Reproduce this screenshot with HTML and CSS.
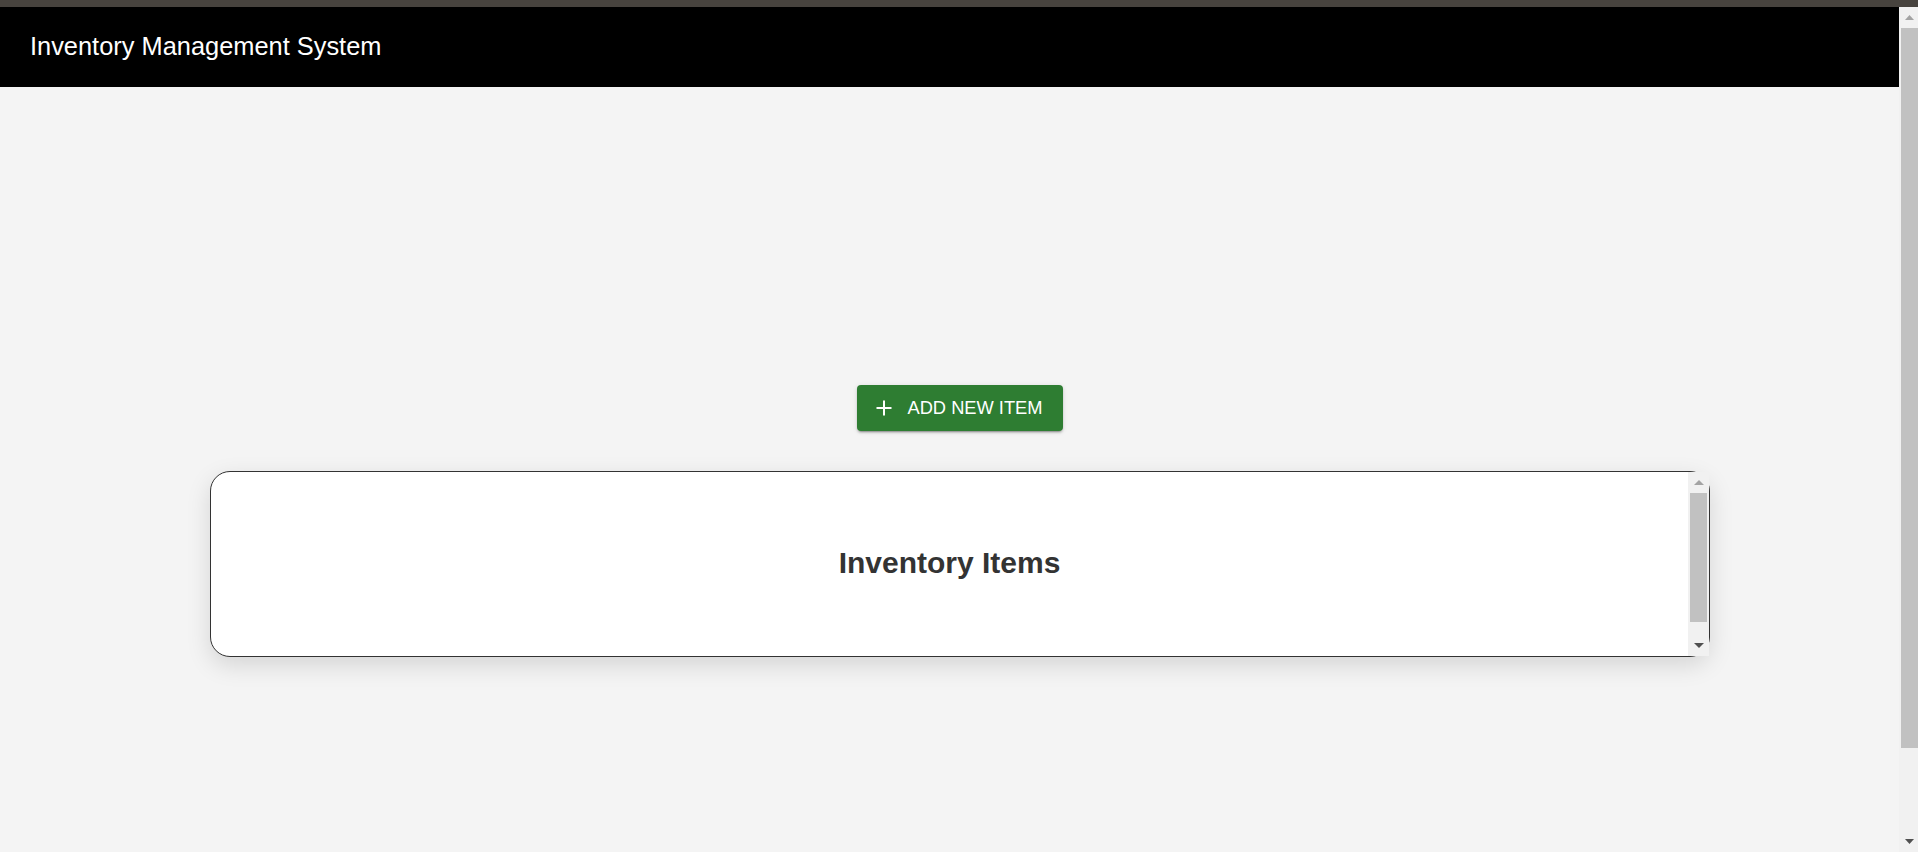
FILE: index.html
```html
<!DOCTYPE html>
<html lang="en">
<head>
<meta charset="utf-8">
<title>Inventory Management System</title>
<link rel="stylesheet" href="styles.css">
</head>
<body>
<div class="topstrip"></div>
<div class="frame">
  <div class="page">
    <header class="appbar">
      <h1 class="app-title">Inventory Management System</h1>
    </header>
    <main class="main">
      <button class="add-btn" type="button">
        <svg class="plus" width="16" height="16" viewBox="0 0 16 16" aria-hidden="true">
          <path d="M8 0.5V15.5M0.5 8H15.5" stroke="#fff" stroke-width="2" fill="none"/>
        </svg>
        <span>ADD NEW ITEM</span>
      </button>
      <section class="card">
        <div class="card-body">
          <h2 class="card-title">Inventory Items</h2>
        </div>
        <div class="scrollbar card-scrollbar">
          <div class="sb-btn">
            <svg width="10" height="5" viewBox="0 0 10 5"><polygon points="0,5 10,5 5,0" fill="#a3a3a3"/></svg>
          </div>
          <div class="sb-track"><div class="sb-thumb card-thumb"></div></div>
          <div class="sb-btn">
            <svg width="10" height="5" viewBox="0 0 10 5"><polygon points="0,0 10,0 5,5" fill="#505050"/></svg>
          </div>
        </div>
      </section>
    </main>
  </div>
  <div class="scrollbar page-scrollbar">
    <div class="sb-btn">
      <svg width="9" height="5" viewBox="0 0 9 5"><polygon points="0,5 9,5 4.5,0" fill="#a3a3a3"/></svg>
    </div>
    <div class="sb-track"><div class="sb-thumb page-thumb"></div></div>
    <div class="sb-btn">
      <svg width="9" height="5" viewBox="0 0 9 5"><polygon points="0,0 9,0 4.5,5" fill="#505050"/></svg>
    </div>
  </div>
</div>
</body>
</html>
```

FILE: styles.css
```css
* { box-sizing: border-box; }

html, body {
  margin: 0;
  padding: 0;
}

body {
  background: #f4f4f4;
  font-family: "Liberation Sans", Arial, sans-serif;
  overflow: hidden;
  height: 852px;
}

.topstrip {
  height: 7px;
  background: #47433e;
}

.frame {
  display: flex;
  height: 845px;
}

.page {
  flex: 1;
  min-width: 0;
  overflow: hidden;
}

.appbar {
  height: 80px;
  background: #000;
  display: flex;
  align-items: center;
  padding-left: 30px;
}

.app-title {
  margin: 0;
  font-size: 25.4px;
  font-weight: 400;
  color: #fff;
  line-height: 1;
}

.main {
  display: flex;
  flex-direction: column;
  align-items: center;
  padding: 298px 0 0 21px;
}

.add-btn {
  display: flex;
  align-items: center;
  gap: 15px;
  height: 46px;
  padding: 0 20px 0 19px;
  border: 0;
  border-radius: 4px;
  background: #2e7d32;
  color: #fff;
  font-family: "Liberation Sans", Arial, sans-serif;
  font-size: 18.3px;
  line-height: 1;
  cursor: pointer;
  box-shadow: 0 3px 1px -2px rgba(0,0,0,0.2), 0 2px 2px 0 rgba(0,0,0,0.14), 0 1px 5px 0 rgba(0,0,0,0.12);
}

.plus {
  display: block;
  flex: none;
}

.card {
  margin-top: 40px;
  width: 1500px;
  height: 186px;
  display: flex;
  background: #fff;
  border: 1px solid #333;
  border-radius: 20px;
  box-shadow: 0 8px 24px rgba(0,0,0,0.13);
}

.card-body {
  flex: 1;
  display: flex;
  align-items: center;
  justify-content: center;
  padding-bottom: 2px;
}

.card-title {
  margin: 0;
  font-size: 30px;
  font-weight: 700;
  color: #333;
  line-height: 1;
}

.scrollbar {
  display: flex;
  flex-direction: column;
  background: #f1f1f1;
  flex: none;
}

.card-scrollbar {
  width: 21px;
}

.page-scrollbar {
  width: 19px;
}

.sb-btn {
  height: 21px;
  display: flex;
  align-items: center;
  justify-content: center;
  flex: none;
}

.sb-btn svg {
  display: block;
}

.page-scrollbar .sb-btn {
  padding-left: 2px;
}

.sb-track {
  flex: 1;
}

.sb-thumb {
  background: #c1c1c1;
}

.card-thumb {
  height: 129px;
  margin: 0 2px;
}

.page-thumb {
  height: 720px;
  margin-left: 2px;
}
```
